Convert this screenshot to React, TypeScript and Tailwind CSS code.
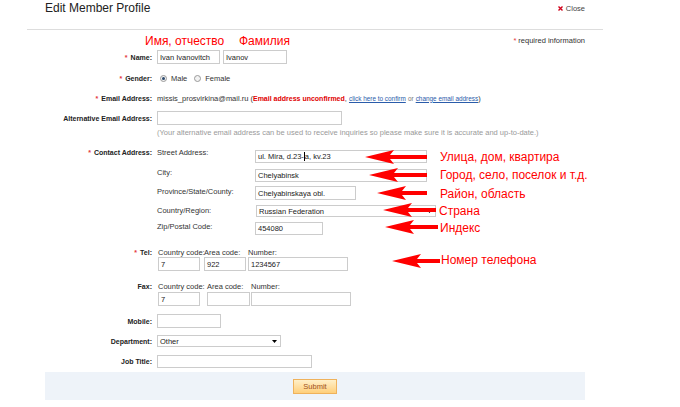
import React from "react";

function Star() {
  return <span className="text-[#e4393c] mr-[3px]">*</span>;
}

function Input({ w, h = 14, value, children }: { w: number; h?: number; value?: string; children?: React.ReactNode }) {
  return (
    <div
      className="border border-[#cccccc] bg-white pl-[2px] flex items-center text-[#222] whitespace-nowrap overflow-hidden box-border"
      style={{ width: w, height: h }}
    >
      {children ?? value}
    </div>
  );
}

function Select({ w, h = 12, value }: { w: number; h?: number; value: string }) {
  return (
    <div
      className="border border-[#cccccc] bg-white pl-[2px] pr-[3px] flex items-center justify-between text-[#222] box-border"
      style={{ width: w, height: h }}
    >
      <span>{value}</span>
      <svg width="5" height="3" viewBox="0 0 5 3">
        <polygon points="0,0 5,0 2.5,3" fill="#000" />
      </svg>
    </div>
  );
}

function Radio({ checked }: { checked?: boolean }) {
  return (
    <div className="w-[7px] h-[7px] rounded-full border border-[#9a9a9a] bg-[#f2f2f2] flex items-center justify-center box-border">
      {checked && <div className="w-[3px] h-[3px] rounded-full bg-[#2c4a6e]" />}
    </div>
  );
}

const arrows: [number, number, number][] = [
  [365, 157, 427],
  [369, 175, 427],
  [377, 193, 427],
  [383, 210, 436],
  [385, 227, 438],
  [392, 261, 440],
];

function arrowPoints(x0: number, y: number, x1: number) {
  const hl = 29;
  const hh = 7;
  const sh = 2;
  return [
    [x0, y],
    [x0 + hl, y - hh],
    [x0 + hl - 4, y - sh],
    [x1, y - sh],
    [x1, y + sh],
    [x0 + hl - 4, y + sh],
    [x0 + hl, y + hh],
  ]
    .map((p) => p.join(","))
    .join(" ");
}

const LBL = "w-[152px] text-right font-bold text-[#222] text-[7px]";

export default function App() {
  return (
    <div className="relative w-[680px] h-[407px] bg-white overflow-hidden font-['Liberation_Sans',Arial,sans-serif] text-[7.5px] leading-[9px] text-[#333]">
      {/* header */}
      <div className="h-[29px] flex justify-between items-start pl-[45px] pr-[95px]">
        <div className="text-[12px] leading-[14px] text-[#222] pt-[1px]">Edit Member Profile</div>
        <div className="flex items-center pt-[4px]">
          <svg width="5" height="5" viewBox="0 0 5 5" className="mr-[3px]">
            <path d="M0.5 0.5 L4.5 4.5 M4.5 0.5 L0.5 4.5" stroke="#d0021b" strokeWidth="1.4" />
          </svg>
          <span className="text-[#444]">Close</span>
        </div>
      </div>
      <div className="ml-[27px] w-[576px] h-px bg-[#dddddd]" />

      {/* required */}
      <div className="h-[20px] flex justify-end pr-[95px] pt-[6px]">
        <span className="text-[#e4393c] mr-[2px]">*</span>
        <span className="text-[#333]">required information</span>
      </div>

      {/* Name */}
      <div className="flex items-center h-[14px]">
        <div className={LBL}><Star />Name:</div>
        <div className="ml-[5px] flex gap-[3px]">
          <Input w={63} value="Ivan Ivanovitch" />
          <Input w={64} value="Ivanov" />
        </div>
      </div>

      {/* Gender */}
      <div className="flex items-center h-[12px] mt-[8px]">
        <div className={LBL}><Star />Gender:</div>
        <div className="ml-[8px] flex items-center">
          <Radio checked />
          <span className="ml-[4px]">Male</span>
          <div className="ml-[7px]"><Radio /></div>
          <span className="ml-[4px]">Female</span>
        </div>
      </div>

      {/* Email */}
      <div className="flex items-center h-[12px] mt-[8px]">
        <div className={LBL}><Star />Email Address:</div>
        <div className="ml-[5px] whitespace-nowrap">
          missis_prosvirkina@mail.ru (<span className="text-[#e00000] font-bold text-[7px]">Email address unconfirmed</span>,{" "}
          <span className="text-[#2a5caa] underline text-[6.4px]">click here to confirm</span>{" "}
          <span className="text-[#777] text-[6.4px]">or</span>{" "}
          <span className="text-[#2a5caa] underline text-[6.4px]">change email address</span>)
        </div>
      </div>

      {/* Alt email */}
      <div className="flex items-center h-[14px] mt-[7px]">
        <div className={LBL}>Alternative Email Address:</div>
        <div className="ml-[5px]">
          <Input w={185} value="" />
        </div>
      </div>
      <div className="flex items-center h-[10px] mt-[2px]">
        <div className="w-[152px]" />
        <div className="ml-[5px] text-[#9a9a9a] whitespace-nowrap">
          (Your alternative email address can be used to receive inquiries so please make sure it is accurate and up-to-date.)
        </div>
      </div>

      {/* Contact address */}
      <div className="flex items-start mt-[13px]">
        <div className={LBL + " -mt-[2px]"}><Star />Contact Address:</div>
        <div className="ml-[5px] flex flex-col">
          <div className="flex items-start h-[13px]">
            <div className="w-[98px] -mt-[2px]">Street Address:</div>
            <Input w={172} h={13}>
              ul. Mira, d.23-<span className="inline-block w-px h-[9px] bg-black" />a, kv.23
            </Input>
          </div>
          <div className="flex items-start h-[13px] mt-[6px]">
            <div className="w-[98px] -mt-[1px]">City:</div>
            <Input w={172} h={13} value="Chelyabinsk" />
          </div>
          <div className="flex items-start h-[14px] mt-[4px]">
            <div className="w-[98px] mt-[1px]">Province/State/County:</div>
            <Input w={101} h={14} value="Chelyabinskaya obl." />
          </div>
          <div className="flex items-start h-[12px] mt-[5px]">
            <div className="w-[99px] mt-[1px]">Country/Region:</div>
            <Select w={180} h={12} value="Russian Federation" />
          </div>
          <div className="flex items-start h-[13px] mt-[5px]">
            <div className="w-[98px]">Zip/Postal Code:</div>
            <Input w={68} h={13} value="454080" />
          </div>
        </div>
      </div>

      {/* Tel */}
      <div className="flex items-start mt-[13px]">
        <div className={LBL + " h-[9px]"}><Star />Tel:</div>
        <div className="ml-[6px] flex">
          <div className="flex flex-col w-[46px]">
            <div className="h-[9px] whitespace-nowrap">Country code:</div>
            <Input w={42} h={14} value="7" />
          </div>
          <div className="flex flex-col w-[44px]">
            <div className="h-[9px] whitespace-nowrap">Area code:</div>
            <Input w={42} h={14} value="922" />
          </div>
          <div className="flex flex-col">
            <div className="h-[9px] whitespace-nowrap">Number:</div>
            <Input w={100} h={14} value="1234567" />
          </div>
        </div>
      </div>

      {/* Fax */}
      <div className="flex items-start mt-[11px]">
        <div className={LBL + " h-[9px]"}>Fax:</div>
        <div className="ml-[6px] flex">
          <div className="flex flex-col w-[49px]">
            <div className="h-[10px] whitespace-nowrap">Country code:</div>
            <Input w={42} h={14} value="7" />
          </div>
          <div className="flex flex-col w-[44px]">
            <div className="h-[10px] whitespace-nowrap">Area code:</div>
            <Input w={43} h={14} value="" />
          </div>
          <div className="flex flex-col">
            <div className="h-[10px] whitespace-nowrap">Number:</div>
            <Input w={100} h={14} value="" />
          </div>
        </div>
      </div>

      {/* Mobile */}
      <div className="flex items-center h-[14px] mt-[8px]">
        <div className={LBL}>Mobile:</div>
        <div className="ml-[5px]">
          <Input w={64} h={14} value="" />
        </div>
      </div>

      {/* Department */}
      <div className="flex items-center h-[12px] mt-[7px]">
        <div className={LBL}>Department:</div>
        <div className="ml-[5px]">
          <Select w={124} h={12} value="Other" />
        </div>
      </div>

      {/* Job title */}
      <div className="flex items-center h-[13px] mt-[8px]">
        <div className={LBL}>Job Title:</div>
        <div className="ml-[5px]">
          <Input w={155} h={13} value="" />
        </div>
      </div>

      {/* Submit band */}
      <div className="ml-[45px] w-[540px] h-[28px] mt-[4px] bg-[#eef3f9] flex items-center justify-center">
        <div className="w-[44px] h-[15px] border border-[#efb25c] bg-gradient-to-b from-[#fff0c8] to-[#ffcf7a] flex items-center justify-center text-[#a0521d] box-border">
          Submit
        </div>
      </div>

      {/* annotations overlay */}
      <div className="absolute inset-0 pointer-events-none">
        <svg width="680" height="407" className="absolute left-0 top-0">
          {arrows.map(([a, b, c], i) => (
            <polygon key={i} points={arrowPoints(a, b, c)} fill="#ff0000" />
          ))}
        </svg>
        <div className="absolute left-[145px] top-[34px] text-[12px] leading-[14px] text-[#ff0000] whitespace-nowrap">Имя, отчество</div>
        <div className="absolute left-[239px] top-[34px] text-[12px] leading-[14px] text-[#ff0000] whitespace-nowrap">Фамилия</div>
        <div className="absolute left-[440px] top-[150px] text-[12px] leading-[14px] text-[#ff0000] whitespace-nowrap">Улица, дом, квартира</div>
        <div className="absolute left-[440px] top-[168px] text-[12px] leading-[14px] text-[#ff0000] whitespace-nowrap">Город, село, поселок и т.д.</div>
        <div className="absolute left-[440px] top-[186.5px] text-[12px] leading-[14px] text-[#ff0000] whitespace-nowrap">Район, область</div>
        <div className="absolute left-[439px] top-[204px] text-[12px] leading-[14px] text-[#ff0000] whitespace-nowrap">Страна</div>
        <div className="absolute left-[440px] top-[221px] text-[12px] leading-[14px] text-[#ff0000] whitespace-nowrap">Индекс</div>
        <div className="absolute left-[441px] top-[253px] text-[12px] leading-[14px] text-[#ff0000] whitespace-nowrap">Номер телефона</div>
      </div>
    </div>
  );
}
